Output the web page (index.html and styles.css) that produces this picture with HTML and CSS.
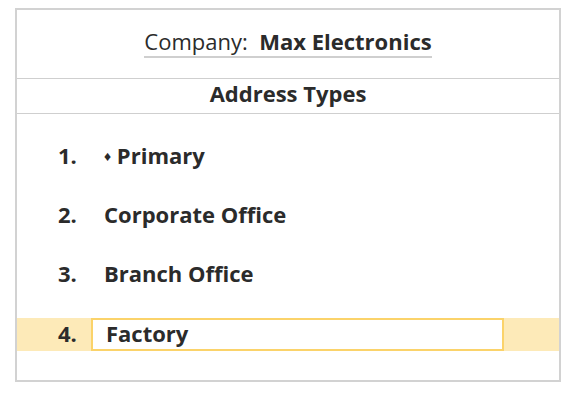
FILE: index.html
```html
<!DOCTYPE html>
<html lang="en">
<head>
    <meta charset="UTF-8">
    <title>Address Types</title>
    <link rel="stylesheet" href="styles.css">
</head>
<body>

<div class="card">
    <div class="company">
        <span class="company-line">Company:&nbsp; <b>Max Electronics</b></span>
    </div>
    <div class="section-title">Address Types</div>
    <ol class="types">
        <li class="row"><span class="num">1.</span><span class="name"><span class="diamond">&#9830;</span> Primary</span></li>
        <li class="row"><span class="num">2.</span><span class="name">Corporate Office</span></li>
        <li class="row"><span class="num">3.</span><span class="name">Branch Office</span></li>
        <li class="row active"><span class="num">4.</span><input class="name-input" type="text" value="Factory"></li>
    </ol>
</div>

</body>
</html>
```

FILE: styles.css
```css
body {
    margin: 0;
    padding: 8px 0 0 15px;
    font-family: "Open Sans", Arial, sans-serif;
    color: #2b2b2b;
    background: #fff;
}
.card {
    width: 542px;
    height: 370px;
    border: 2px solid #d2d2d2;
}
.company {
    height: 68px;
    box-sizing: border-box;
    padding-top: 17px;
    display: flex;
    justify-content: center;
    align-items: flex-start;
    font-size: 22px;
    line-height: 28px;
}
.company-line {
    padding-bottom: 1px;
    border-bottom: 2px solid #cfcfcf;
}
.company-line b {
    font-weight: 700;
}
.section-title {
    height: 34px;
    line-height: 29px;
    text-align: center;
    font-size: 22px;
    font-weight: 700;
    border-top: 1px solid #cfcfcf;
    border-bottom: 1px solid #cfcfcf;
}
.types {
    list-style: none;
    margin: 0;
    padding: 27px 0 0 0;
    display: flex;
    flex-direction: column;
    gap: 26px;
}
.row {
    height: 33px;
    display: flex;
    align-items: center;
    font-size: 22px;
    font-weight: 700;
}
.num,
.name {
    margin-top: -5px;
}
.num {
    width: 74px;
    padding-left: 41px;
    box-sizing: border-box;
}
.name {
    padding-left: 13px;
}
.diamond {
    font-size: 14px;
    vertical-align: 3px;
}
.row.active {
    background: #fdeab8;
}
.row.active .num {
    margin-top: -4px;
}
.name-input {
    width: 413px;
    height: 33px;
    box-sizing: border-box;
    border: 2px solid #fbd36a;
    padding: 0 0 4px 13px;
    font-family: inherit;
    font-size: 22px;
    font-weight: 700;
    color: #2b2b2b;
    background: #fff;
    outline: none;
}
```
